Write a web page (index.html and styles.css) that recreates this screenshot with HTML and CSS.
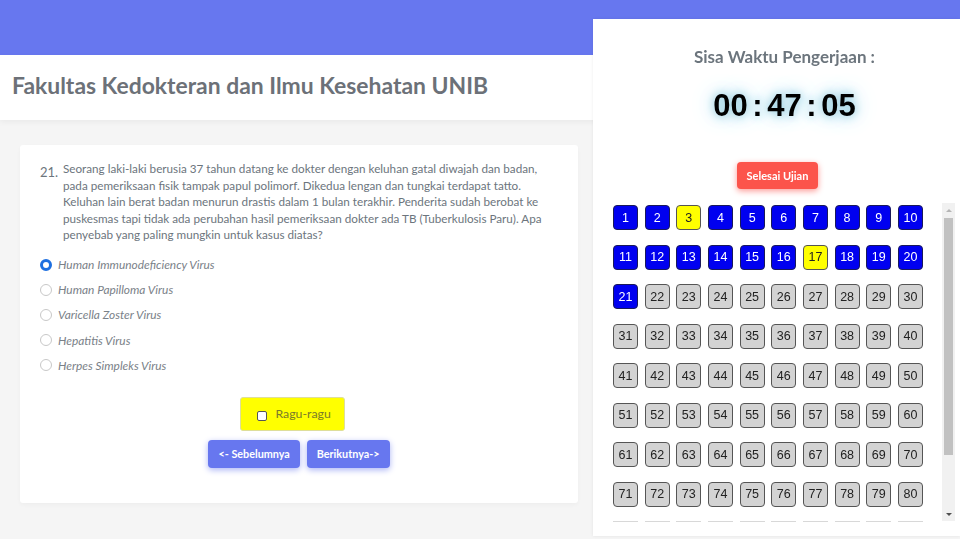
FILE: index.html
```html
<!DOCTYPE html>
<html lang="id">
<head>
<meta charset="utf-8">
<title>Ujian</title>
<link rel="stylesheet" href="styles.css">
</head>
<body>
<div class="topbar"></div>
<header class="header">
  <h1 class="title">Fakultas Kedokteran dan Ilmu Kesehatan UNIB</h1>
</header>
<main class="main">
  <section class="card">
    <div class="question">
      <span class="qnum">21.</span>
      <p class="qtext">Seorang laki-laki berusia 37 tahun datang ke dokter dengan keluhan gatal diwajah dan badan, pada pemeriksaan fisik tampak papul polimorf. Dikedua lengan dan tungkai terdapat tatto. Keluhan lain berat badan menurun drastis dalam 1 bulan terakhir. Penderita sudah berobat ke puskesmas tapi tidak ada perubahan hasil pemeriksaan dokter ada TB (Tuberkulosis Paru). Apa penyebab yang paling mungkin untuk kasus diatas?</p>
    </div>
    <ul class="options">
      <li class="option"><span class="radio checked"></span><span class="opt-label">Human Immunodeficiency Virus</span></li>
      <li class="option"><span class="radio"></span><span class="opt-label">Human Papilloma Virus</span></li>
      <li class="option"><span class="radio"></span><span class="opt-label">Varicella Zoster Virus</span></li>
      <li class="option"><span class="radio"></span><span class="opt-label">Hepatitis Virus</span></li>
      <li class="option"><span class="radio"></span><span class="opt-label">Herpes Simpleks Virus</span></li>
    </ul>
    <div class="doubt-row">
      <label class="doubt"><span class="checkbox"></span>Ragu-ragu</label>
    </div>
    <div class="nav">
      <button class="btn-nav">&lt;- Sebelumnya</button>
      <button class="btn-nav">Berikutnya-&gt;</button>
    </div>
  </section>
</main>
<aside class="panel">
  <div class="timer-block">
    <h2 class="timer-label">Sisa Waktu Pengerjaan :</h2>
    <div class="timer">00 : 47 : 05</div>
  </div>
  <div class="finish-row"><button class="btn-finish">Selesai Ujian</button></div>
  <div class="grid-wrap">
    <div class="grid-view">
      <div class="grid">
        <button class="qb done">1</button><button class="qb done">2</button><button class="qb doubtful">3</button><button class="qb done">4</button><button class="qb done">5</button><button class="qb done">6</button><button class="qb done">7</button><button class="qb done">8</button><button class="qb done">9</button><button class="qb done">10</button>
        <button class="qb done">11</button><button class="qb done">12</button><button class="qb done">13</button><button class="qb done">14</button><button class="qb done">15</button><button class="qb done">16</button><button class="qb doubtful">17</button><button class="qb done">18</button><button class="qb done">19</button><button class="qb done">20</button>
        <button class="qb done">21</button><button class="qb">22</button><button class="qb">23</button><button class="qb">24</button><button class="qb">25</button><button class="qb">26</button><button class="qb">27</button><button class="qb">28</button><button class="qb">29</button><button class="qb">30</button>
        <button class="qb">31</button><button class="qb">32</button><button class="qb">33</button><button class="qb">34</button><button class="qb">35</button><button class="qb">36</button><button class="qb">37</button><button class="qb">38</button><button class="qb">39</button><button class="qb">40</button>
        <button class="qb">41</button><button class="qb">42</button><button class="qb">43</button><button class="qb">44</button><button class="qb">45</button><button class="qb">46</button><button class="qb">47</button><button class="qb">48</button><button class="qb">49</button><button class="qb">50</button>
        <button class="qb">51</button><button class="qb">52</button><button class="qb">53</button><button class="qb">54</button><button class="qb">55</button><button class="qb">56</button><button class="qb">57</button><button class="qb">58</button><button class="qb">59</button><button class="qb">60</button>
        <button class="qb">61</button><button class="qb">62</button><button class="qb">63</button><button class="qb">64</button><button class="qb">65</button><button class="qb">66</button><button class="qb">67</button><button class="qb">68</button><button class="qb">69</button><button class="qb">70</button>
        <button class="qb">71</button><button class="qb">72</button><button class="qb">73</button><button class="qb">74</button><button class="qb">75</button><button class="qb">76</button><button class="qb">77</button><button class="qb">78</button><button class="qb">79</button><button class="qb">80</button>
      </div>
      <div class="grid-peek">
        <span class="peek"></span><span class="peek"></span><span class="peek"></span><span class="peek"></span><span class="peek"></span><span class="peek"></span><span class="peek"></span><span class="peek"></span><span class="peek"></span><span class="peek"></span>
      </div>
    </div>
    <div class="scrollbar" aria-hidden="true">
      <span class="sb-arrow up"></span>
      <span class="sb-track"><span class="sb-thumb"></span></span>
      <span class="sb-arrow down"></span>
    </div>
  </div>
</aside>
</body>
</html>
```

FILE: styles.css
```css
* { box-sizing: border-box; }
html, body { margin: 0; padding: 0; }
body {
  background: #f5f5f5;
  font-family: "Lato", "Noto Sans", sans-serif;
  color: #6c757d;
  width: 960px;
  height: 539px;
  overflow: hidden;
}
.topbar {
  height: 55px;
  background: #6777ef;
}
.header {
  height: 65px;
  background: #fff;
  box-shadow: 0 2px 6px rgba(0,0,0,0.05);
  display: flex;
  align-items: center;
  padding: 0 0 6px 12px;
}
.title {
  margin: 0;
  font-size: 22.9px;
  font-weight: 700;
  color: #6c7178;
}
.main {
  padding: 25px 0 0 20px;
}
.card {
  width: 558px;
  height: 358px;
  background: #fff;
  border-radius: 3px;
  box-shadow: 0 2px 4px rgba(0,0,0,0.03);
  padding: 15px 20px 20px 20px;
}
.question {
  display: flex;
  align-items: flex-start;
}
.qnum {
  width: 23px;
  flex: none;
  font-size: 13px;
  padding-top: 4px;
  color: #6c757d;
}
.qtext {
  margin: 0;
  font-size: 11.7px;
  line-height: 16.6px;
  color: #6c757d;
  width: 490px;
}
.options {
  list-style: none;
  margin: 9px 0 0 0;
  padding: 0;
}
.option {
  display: flex;
  align-items: center;
  height: 25.2px;
}
.radio {
  width: 12px;
  height: 12px;
  border-radius: 50%;
  border: 1px solid #c8c8c8;
  background: #fff;
  margin: 0 6px 0 0;
  flex: none;
}
.radio.checked {
  border: 3.5px solid #1d6fe0;
}
.opt-label {
  font-style: italic;
  font-size: 11.9px;
  color: #7a8188;
}
.doubt-row {
  display: flex;
  justify-content: center;
  margin-top: 19px;
  padding-right: 14px;
}
.doubt {
  width: 105px;
  height: 34px;
  background: #ffff00;
  border: 1px solid #dede9a;
  border-radius: 3px;
  display: flex;
  align-items: center;
  padding-left: 16px;
  font-size: 12.3px;
  color: #7a7a2a;
}
.checkbox {
  width: 10px;
  height: 10px;
  border: 1px solid #555;
  border-radius: 2px;
  background: #fff;
  margin: 4px 9px 0 0;
}
.nav {
  display: flex;
  justify-content: center;
  gap: 7px;
  margin-top: 9px;
}
.btn-nav {
  height: 28px;
  padding: 0 10px;
  border: none;
  border-radius: 4px;
  background: #6777ef;
  color: #fff;
  font-family: "Lato", "Noto Sans", sans-serif;
  font-weight: 700;
  font-size: 10.8px;
  box-shadow: 0 2px 6px #acb5f6;
}
.panel {
  position: fixed;
  left: 593px;
  top: 19px;
  width: 367px;
  height: 517px;
  background: #fff;
  box-shadow: 0 0 3px rgba(0,0,0,0.08);
  padding: 0 5px 0 12px;
  display: flex;
  flex-direction: column;
}
.timer-block {
  text-align: center;
  padding-left: 9px;
}
.timer-label {
  margin: 27px 0 0 0;
  font-size: 17px;
  font-weight: 700;
  color: #6c757d;
}
.timer {
  margin-top: 21px;
  font-family: "Liberation Sans", Arial, sans-serif;
  font-weight: 700;
  font-size: 31px;
  color: #000;
  word-spacing: -4px;
  text-shadow: 0 0 8px #8ccbe0, 0 0 18px #a9d9ea, 0 0 30px #cfeaf4;
}
.finish-row {
  display: flex;
  justify-content: center;
  margin-top: 38px;
  padding-right: 5px;
}
.btn-finish {
  width: 81px;
  height: 27px;
  border: none;
  border-radius: 4px;
  background: #fc544b;
  color: #fff;
  font-family: "Lato", "Noto Sans", sans-serif;
  font-weight: 700;
  font-size: 11px;
  box-shadow: 0 2px 6px #fd9a96;
}
.grid-wrap {
  flex: none;
  margin-top: 11px;
  height: 322px;
  display: flex;
}
.grid-view {
  flex: 1;
  overflow: hidden;
  padding: 5px 0 0 8px;
}
.grid {
  display: grid;
  grid-template-columns: repeat(10, 25px);
  column-gap: 6.67px;
  row-gap: 14.5px;
}
.grid-peek {
  display: grid;
  grid-template-columns: repeat(10, 25px);
  column-gap: 6.67px;
  margin-top: 14px;
}
.peek {
  height: 2px;
  border-top: 1px solid #d8d8d8;
}
.qb {
  width: 25px;
  height: 25px;
  padding: 0;
  border: 1px solid #555;
  border-radius: 4px;
  background: #d3d3d3;
  color: #222;
  font-family: "Liberation Sans", Arial, sans-serif;
  font-size: 12.5px;
}
.qb.done {
  background: #0000f0;
  border-color: #1a1a5a;
  color: #fff;
}
.qb.doubtful {
  background: #ffff00;
  border-color: #555;
  color: #222;
}
.scrollbar {
  flex: none;
  width: 13px;
  margin-top: 3px;
  height: 318px;
  background: #f1f1f1;
  display: flex;
  flex-direction: column;
  align-items: center;
}
.sb-arrow {
  flex: none;
  height: 14px;
  width: 13px;
  display: flex;
  justify-content: center;
  align-items: center;
}
.sb-arrow::before {
  content: "";
  width: 0;
  height: 0;
  border-left: 3px solid transparent;
  border-right: 3px solid transparent;
}
.sb-arrow.up::before {
  border-bottom: 3px solid #b5b5b5;
}
.sb-arrow.down::before {
  border-top: 3px solid #505050;
}
.sb-track {
  flex: 1;
  width: 13px;
  display: flex;
  justify-content: center;
}
.sb-thumb {
  width: 9px;
  height: 237px;
  margin-top: 1px;
  background: #c1c1c1;
}
```
